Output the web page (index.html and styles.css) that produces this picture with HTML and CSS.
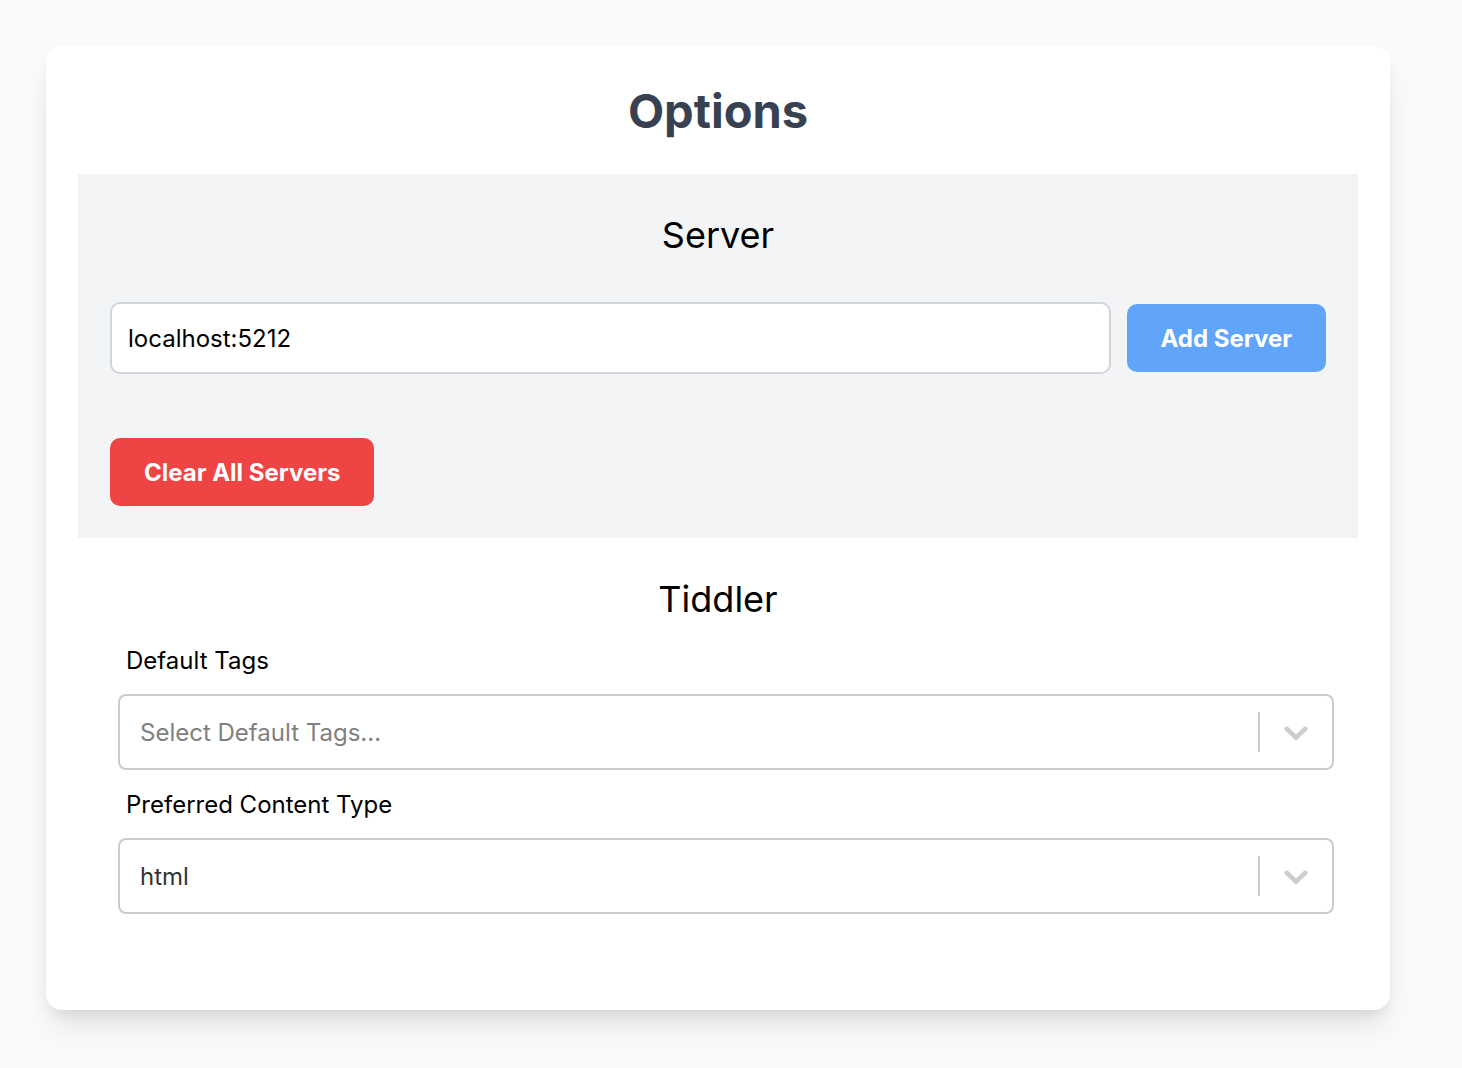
FILE: index.html
```html
<!DOCTYPE html>
<html lang="en">
<head>
<meta charset="utf-8">
<title>Options</title>
<link rel="stylesheet" href="styles.css">
</head>
<body>
<main class="card">
  <h1 class="title">Options</h1>
  <section class="server">
    <h2 class="heading">Server</h2>
    <div class="server-row">
      <input class="text-input" type="text" value="localhost:5212">
      <button class="btn btn-blue">Add Server</button>
    </div>
    <div class="clear-row">
      <button class="btn btn-red">Clear All Servers</button>
    </div>
  </section>
  <section class="tiddler">
    <h2 class="heading heading-tiddler">Tiddler</h2>
    <div class="fields">
      <label class="label">Default Tags</label>
      <div class="select">
        <div class="select-value placeholder">Select Default Tags...</div>
        <div class="indicators">
          <span class="separator"></span>
          <span class="chevron">
            <svg viewBox="0 0 20 20" width="40" height="40" aria-hidden="true"><path d="M4.516 7.548c0.436-0.446 1.043-0.481 1.576 0l3.908 3.747 3.908-3.747c0.533-0.481 1.141-0.446 1.574 0 0.436 0.445 0.408 1.197 0 1.615-0.406 0.418-4.695 4.502-4.695 4.502-0.217 0.223-0.502 0.335-0.787 0.335s-0.57-0.112-0.789-0.335c0 0-4.287-4.084-4.695-4.502s-0.436-1.170 0-1.615z"/></svg>
          </span>
        </div>
      </div>
      <label class="label">Preferred Content Type</label>
      <div class="select">
        <div class="select-value">html</div>
        <div class="indicators">
          <span class="separator"></span>
          <span class="chevron">
            <svg viewBox="0 0 20 20" width="40" height="40" aria-hidden="true"><path d="M4.516 7.548c0.436-0.446 1.043-0.481 1.576 0l3.908 3.747 3.908-3.747c0.533-0.481 1.141-0.446 1.574 0 0.436 0.445 0.408 1.197 0 1.615-0.406 0.418-4.695 4.502-4.695 4.502-0.217 0.223-0.502 0.335-0.787 0.335s-0.57-0.112-0.789-0.335c0 0-4.287-4.084-4.695-4.502s-0.436-1.170 0-1.615z"/></svg>
          </span>
        </div>
      </div>
    </div>
  </section>
</main>
</body>
</html>
```

FILE: styles.css
```css
* { box-sizing: border-box; }

html, body {
  margin: 0;
  padding: 0;
}

body {
  background: #f9fafb;
  font-family: Inter, "Noto Sans", sans-serif;
  padding: 46px;
  min-height: 1068px;
}

.card {
  width: 1344px;
  height: 964px;
  background: #ffffff;
  border-radius: 16px;
  box-shadow: 0 20px 30px -6px rgba(0,0,0,0.10), 0 8px 12px -4px rgba(0,0,0,0.08);
  padding: 32px 32px 0;
}

.title {
  margin: 0;
  text-align: center;
  font-size: 47px;
  line-height: 66px;
  font-weight: 700;
  color: #374151;
}

.server {
  margin-top: 30px;
  background: #f3f4f6;
  padding: 33px 32px 32px;
}

.heading {
  margin: 0;
  text-align: center;
  font-size: 36px;
  line-height: 56px;
  font-weight: 400;
  color: #000;
}

.server .heading {
  margin-bottom: 39px;
}

.server-row {
  display: flex;
  align-items: center;
  gap: 16px;
}

.text-input {
  flex: 1;
  height: 72px;
  border: 2px solid #d1d5db;
  border-radius: 10px;
  background: #fff;
  padding: 0 16px;
  font-family: inherit;
  font-size: 24px;
  color: #000;
  outline: none;
}

.btn {
  height: 68px;
  border: none;
  border-radius: 10px;
  font-family: inherit;
  font-size: 24px;
  font-weight: 700;
  color: #fff;
  cursor: pointer;
}

.btn-blue {
  background: #60a5fa;
  padding: 0 34px;
}

.btn-red {
  background: #ef4444;
  padding: 0 34px;
}

.clear-row {
  margin-top: 64px;
  display: flex;
}

.tiddler {
  padding-top: 33px;
}

.heading-tiddler {
  margin-bottom: 16px;
}

.fields {
  padding: 0 24px 0 40px;
}

.label {
  display: block;
  padding-left: 8px;
  font-size: 24px;
  line-height: 36px;
  color: #000;
  margin-bottom: 15px;
}

.select {
  display: flex;
  align-items: stretch;
  height: 76px;
  border: 2px solid #cccccc;
  border-radius: 8px;
  background: #fff;
  margin-bottom: 17px;
}

.select-value {
  flex: 1;
  display: flex;
  align-items: center;
  padding: 4px 16px;
  margin-left: 4px;
  font-size: 24px;
  color: #333333;
}

.select-value.placeholder {
  color: #808080;
}

.indicators {
  display: flex;
  align-items: center;
}

.separator {
  align-self: stretch;
  width: 2px;
  margin: 16px 0;
  background: #cccccc;
}

.chevron {
  display: flex;
  padding: 16px;
  fill: #cccccc;
}
```
